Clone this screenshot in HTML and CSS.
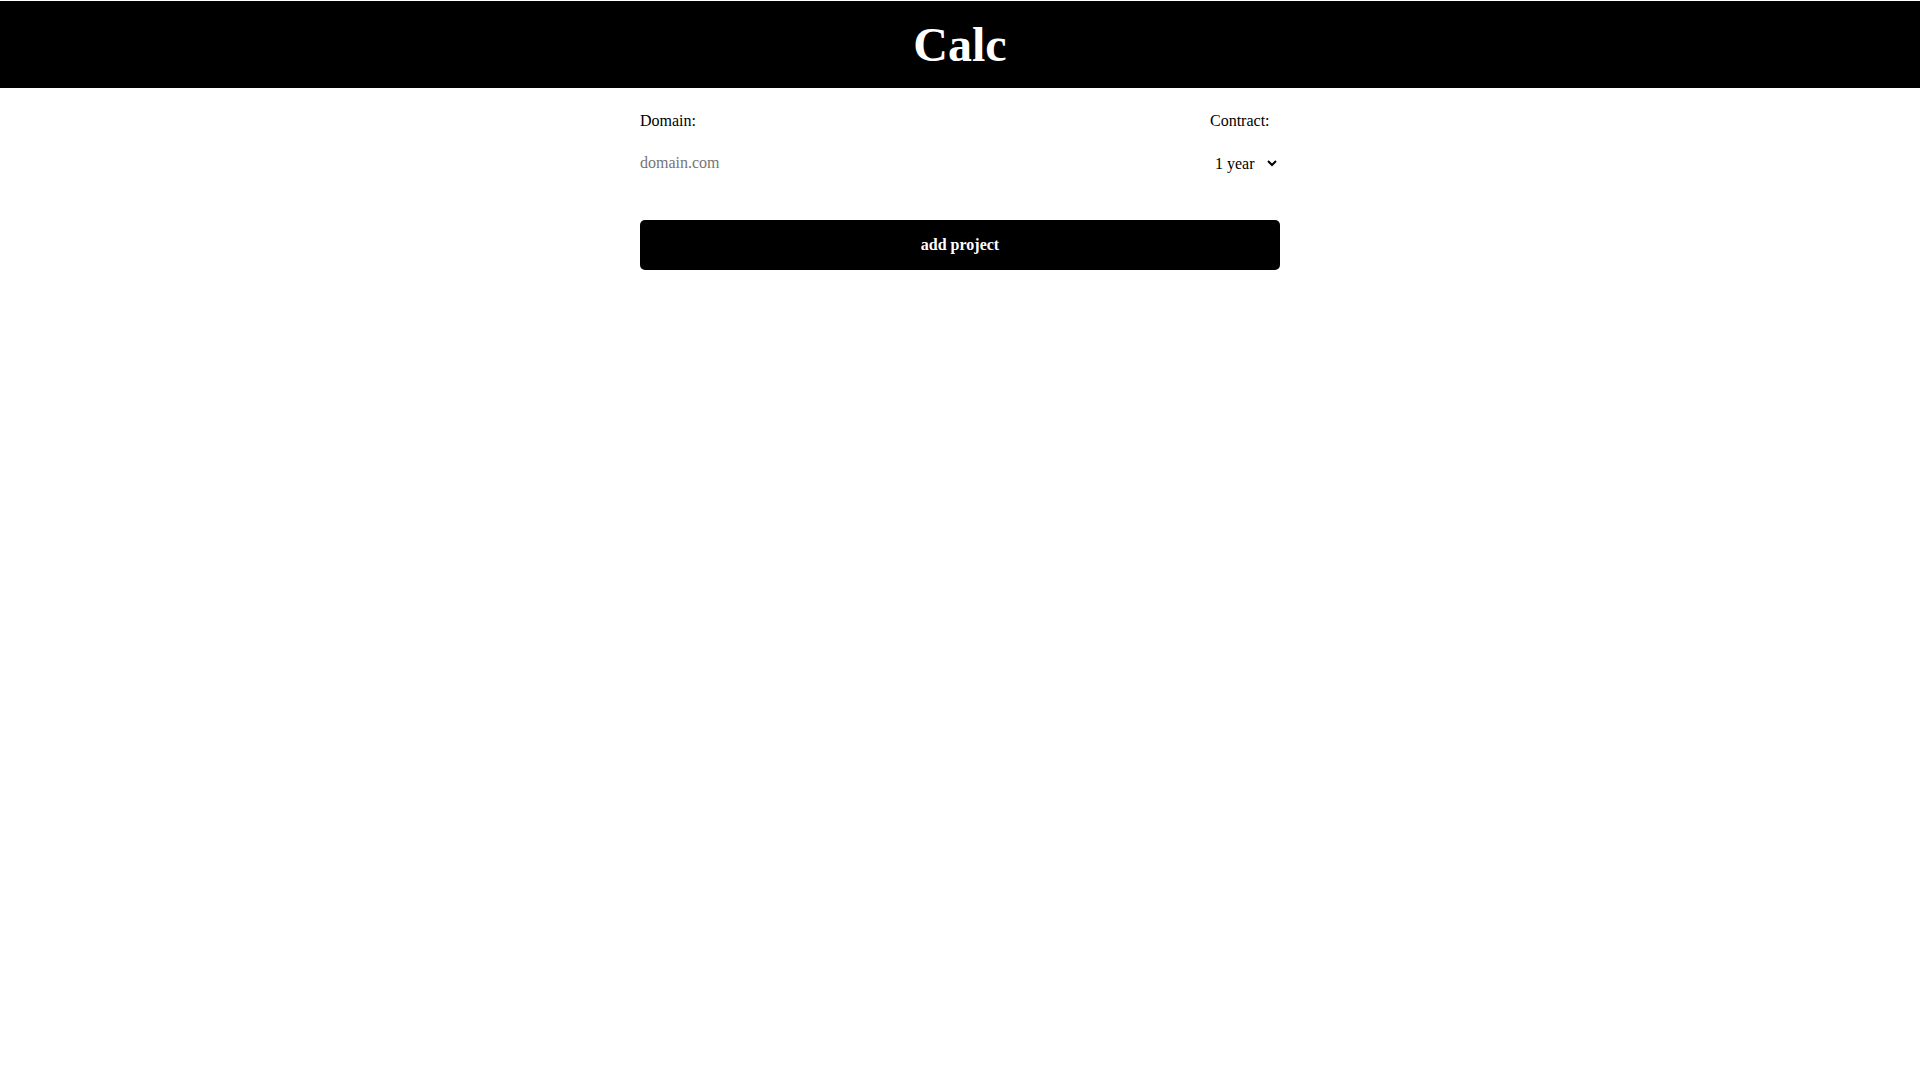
FILE: index.html
```html
<!DOCTYPE html>
<html lang="en">

<head>
    <meta charset="UTF-8">
    <meta name="viewport" content="width=device-width, initial-scale=1.0">
    <title>Calc</title>
    <link rel="stylesheet" href="styles.css">
</head>

<body>
    <header class="header">
        <h1>Calc</h1>
    </header>

    <main class="calc">
        <div class="fields">
            <div class="field">
                <label for="domain">Domain:</label>
                <input type="text" id="domain" placeholder="domain.com">
            </div>
            <div class="field">
                <label for="contract">Contract:</label>
                <select id="contract">
                    <option>1 year</option>
                    <option>2 years</option>
                    <option>3 years</option>
                </select>
            </div>
        </div>

        <button class="add-project">add project</button>
    </main>
</body>

</html>
```

FILE: styles.css
```css
body {
    margin: 0;
    padding-top: 1px;
    font-family: 'Liberation Serif', 'Times New Roman', serif;
    color: black;
    background: white;
}

.header {
    background-color: black;
    color: white;
    height: 87px;
    display: flex;
    justify-content: center;
    align-items: center;
}

.header h1 {
    margin: 0;
    font-size: 48px;
    font-weight: bold;
}

.calc {
    width: 640px;
    margin: 0 auto;
    padding-top: 24px;
}

.fields {
    display: flex;
    justify-content: space-between;
}

.field {
    display: flex;
    flex-direction: column;
    align-items: flex-start;
}

.field label {
    font-size: 16px;
    margin-bottom: 24px;
}

.field input {
    border: none;
    outline: none;
    padding: 0;
    font-family: inherit;
    font-size: 16px;
    width: 300px;
}

.field input::placeholder {
    color: #757575;
}

.field select {
    border: none;
    outline: none;
    background: white;
    padding: 0 3px 0 1px;
    font-family: inherit;
    font-size: 16px;
    color: black;
}

.add-project {
    display: block;
    width: 100%;
    height: 50px;
    margin-top: 47px;
    background-color: black;
    color: white;
    border: none;
    border-radius: 5px;
    font-family: inherit;
    font-size: 16px;
    font-weight: bold;
    cursor: pointer;
}
```
